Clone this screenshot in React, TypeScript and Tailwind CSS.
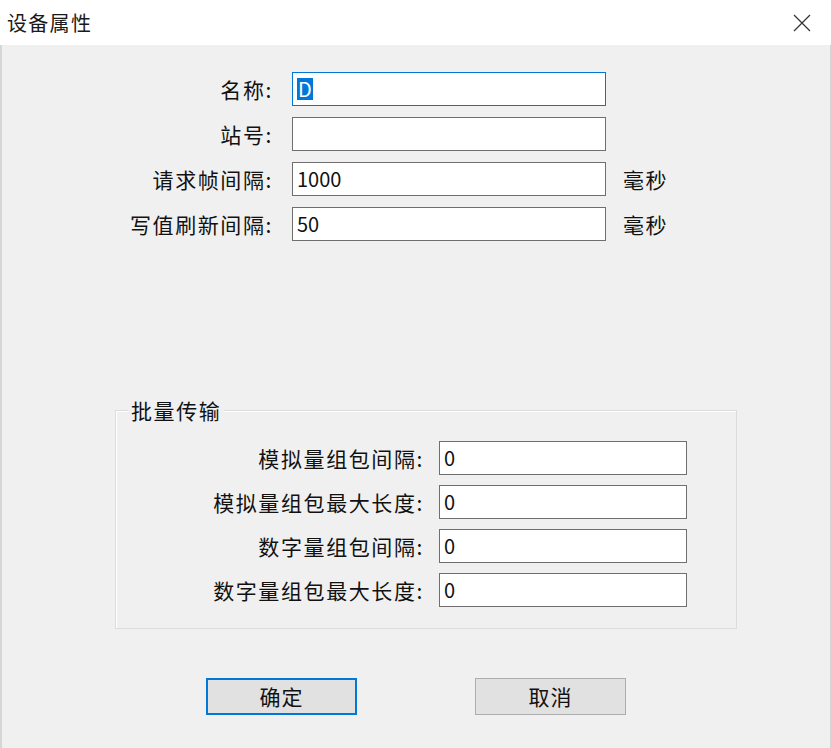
import React from "react";

const font = { fontFamily: '"Noto Sans CJK SC", "Noto Sans", sans-serif' };

interface FieldProps {
  label: string;
  value?: string;
  unit?: string;
  focused?: boolean;
}

const TopField: React.FC<FieldProps> = ({ label, value = "", unit, focused }) => (
  <div className="flex items-center h-[34px]">
    <div className="w-[273px] text-right text-[21px] tracking-[1.6px] text-[#111] leading-none">
      {label}
    </div>
    <div
      className={
        focused
          ? "ml-[19px] w-[314px] h-full bg-white border border-[#0078d7] flex items-center pl-[4px] text-[20px] text-[#111]"
          : "ml-[19px] w-[314px] h-full bg-white border border-[#6f6f6f] flex items-center pl-[4px] text-[20px] text-[#111]"
      }
    >
      {focused ? (
        <span className="bg-[#0078d7] text-white leading-[22px] px-[1px]">{value}</span>
      ) : (
        value
      )}
    </div>
    {unit && (
      <div className="ml-[17px] text-[21px] tracking-[1.6px] text-[#111] leading-none">
        {unit}
      </div>
    )}
  </div>
);

const GroupField: React.FC<FieldProps> = ({ label, value = "" }) => (
  <div className="flex items-center h-[34px]">
    <div className="w-[308px] text-right text-[21px] tracking-[1.6px] text-[#111] leading-none">
      {label}
    </div>
    <div className="ml-[15px] w-[248px] h-full bg-white border border-[#6f6f6f] flex items-center pl-[4px] text-[20px] text-[#111]">
      {value}
    </div>
  </div>
);

export default function App() {
  return (
    <div className="w-[831px] h-[748px] bg-[#f0f0f0] flex flex-col overflow-hidden" style={font}>
      <div className="h-[45px] bg-white flex items-center justify-between pl-[7px] pr-[20px] shrink-0">
        <span className="text-[20px] tracking-[1.3px] text-[#1a1a1a]">设备属性</span>
        <svg width="18" height="18" viewBox="0 0 18 18" className="text-[#333]">
          <path d="M1 1 L17 17 M17 1 L1 17" stroke="currentColor" strokeWidth="1.2" fill="none" />
        </svg>
      </div>
      <div className="flex-1 flex flex-col border-l-2 border-r border-[#d6d6d6]">
        <div className="mt-[27px] flex flex-col gap-[11px] -ml-[2px]">
          <TopField label="名称:" value="D" focused />
          <TopField label="站号:" />
          <TopField label="请求帧间隔:" value="1000" unit="毫秒" />
          <TopField label="写值刷新间隔:" value="50" unit="毫秒" />
        </div>

        <div className="relative mt-[169px] ml-[113px] w-[622px] h-[219px] border border-[#dcdcdc] shadow-[inset_1px_1px_0_#ffffff]">
          <span className="absolute -top-[14px] left-[12px] px-[3px] bg-[#f0f0f0] text-[21px] tracking-[1.6px] text-[#111] leading-[26px]">
            批量传输
          </span>
          <div className="mt-[30px] flex flex-col gap-[10px]">
            <GroupField label="模拟量组包间隔:" value="0" />
            <GroupField label="模拟量组包最大长度:" value="0" />
            <GroupField label="数字量组包间隔:" value="0" />
            <GroupField label="数字量组包最大长度:" value="0" />
          </div>
        </div>

        <div className="mt-[49px] ml-[204px] flex gap-[118px]">
          <button className="w-[151px] h-[37px] bg-[#e1e1e1] border-2 border-[#0078d7] text-[21px] tracking-[1px] text-[#111]">
            确定
          </button>
          <button className="w-[151px] h-[37px] bg-[#e1e1e1] border border-[#adadad] text-[21px] tracking-[1px] text-[#111]">
            取消
          </button>
        </div>
      </div>
    </div>
  );
}
